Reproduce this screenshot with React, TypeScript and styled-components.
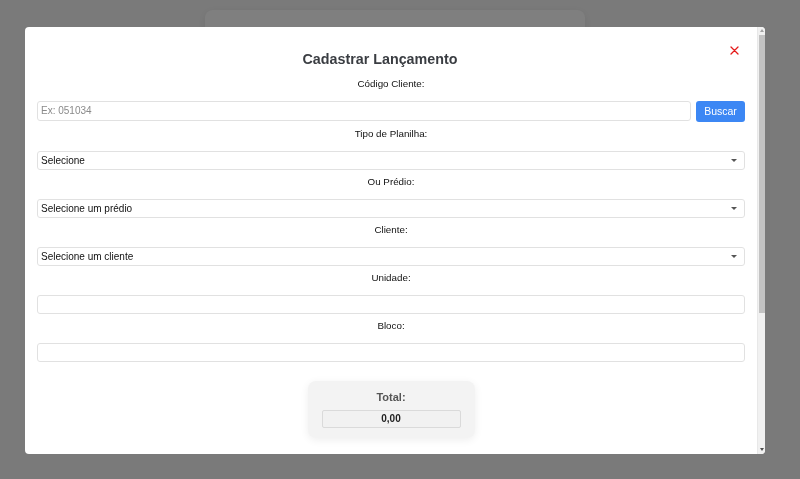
import styled, { createGlobalStyle } from 'styled-components';

const GlobalStyle = createGlobalStyle`
  html, body {
    margin: 0;
    padding: 0;
    background: #f5f5f5;
    font-family: 'Liberation Sans', Arial, sans-serif;
    overflow: hidden;
  }
  * {
    box-sizing: border-box;
  }
`;

const Page = styled.div`
  width: 790px;
  height: 479px;
  padding-top: 10px;
`;

const BackCard = styled.div`
  width: 380px;
  height: 320px;
  margin: 0 auto;
  background: #ffffff;
  border-radius: 8px;
  box-shadow: 0 2px 10px rgba(0, 0, 0, 0.08);
`;

const Overlay = styled.div`
  position: fixed;
  inset: 0;
  background: rgba(0, 0, 0, 0.5);
  display: flex;
  align-items: center;
  padding-left: 25px;
`;

const Modal = styled.div`
  width: 740px;
  height: 427px;
  margin-top: 1px;
  background: #ffffff;
  border-radius: 4px;
  overflow: hidden;
  display: flex;
  color: #000;
`;

const Content = styled.div`
  flex: 1;
  min-width: 0;
  padding: 16px 12px 0;
`;

const ScrollTrack = styled.div`
  flex: none;
  width: 8px;
  background: #f1f1f1;
  border-left: 1px solid #e8e8e8;
  display: flex;
  flex-direction: column;
  align-items: center;
`;

const ScrollArrow = styled.div<{ $down?: boolean; $color: string }>`
  flex: none;
  height: 8px;
  width: 100%;
  display: flex;
  align-items: center;
  justify-content: center;

  &::before {
    content: '';
    width: 0;
    height: 0;
    border-left: 2.5px solid transparent;
    border-right: 2.5px solid transparent;
    ${(p) =>
      p.$down
        ? `border-top: 3px solid ${p.$color};`
        : `border-bottom: 3px solid ${p.$color};`}
  }
`;

const ScrollThumb = styled.div`
  flex: none;
  width: 6px;
  height: 278px;
  background: #c3c3c3;
`;

const ScrollRest = styled.div`
  flex: 1;
`;

const Header = styled.div`
  display: flex;
  align-items: flex-start;
`;

const Title = styled.h2`
  flex: 1;
  margin: 7px 0 0;
  text-align: center;
  font-size: 14.3px;
  line-height: 18px;
  font-weight: 700;
  color: #3a3d42;
`;

const CloseButton = styled.button`
  width: 22px;
  height: 16px;
  padding: 0;
  border: none;
  background: transparent;
  display: flex;
  align-items: center;
  justify-content: center;
  cursor: pointer;
`;

const Form = styled.form`
  margin-top: 10px;
  display: flex;
  flex-direction: column;
`;

const Group = styled.div`
  margin-bottom: 6px;
`;

const Label = styled.label`
  display: block;
  text-align: center;
  font-size: 9.8px;
  line-height: 12px;
  color: #111;
  margin-bottom: 11px;
`;

const Row = styled.div`
  display: flex;
  gap: 5px;
  align-items: flex-start;
`;

const Input = styled.input<{ $tall?: boolean }>`
  display: block;
  width: 100%;
  height: ${(p) => (p.$tall ? '20px' : '19px')};
  padding: 0 3px;
  font-family: 'Liberation Sans', Arial, sans-serif;
  font-size: 10px;
  color: #111;
  background: #fff;
  border: 1px solid #e1e1e1;
  border-radius: 3px;
  outline: none;

  &::placeholder {
    color: #8a8a8a;
  }
`;

const SelectWrap = styled.div`
  position: relative;

  &::after {
    content: '';
    position: absolute;
    right: 8px;
    top: 8px;
    width: 0;
    height: 0;
    border-left: 3px solid transparent;
    border-right: 3px solid transparent;
    border-top: 3px solid #555;
    pointer-events: none;
  }
`;

const Select = styled.select`
  display: block;
  width: 100%;
  height: 19px;
  padding: 0 3px;
  appearance: none;
  font-family: 'Liberation Sans', Arial, sans-serif;
  font-size: 10px;
  color: #111;
  background: #fff;
  border: 1px solid #e1e1e1;
  border-radius: 3px;
  outline: none;
`;

const SearchButton = styled.button`
  flex: none;
  width: 49px;
  height: 21px;
  border: none;
  border-radius: 3px;
  background: #3c87f4;
  color: #ffffff;
  font-family: 'Liberation Sans', Arial, sans-serif;
  font-size: 10.5px;
  cursor: pointer;
`;

const TotalBox = styled.div`
  align-self: center;
  width: 167px;
  margin-top: 13px;
  padding: 10px 14px;
  background: #f3f3f3;
  border-radius: 8px;
  box-shadow: 0 2px 8px rgba(0, 0, 0, 0.07);
  text-align: center;
`;

const TotalLabel = styled.div`
  font-size: 11px;
  line-height: 13px;
  font-weight: 700;
  color: #555;
`;

const TotalValue = styled.div`
  margin-top: 6px;
  height: 18px;
  line-height: 16px;
  border: 1px solid #dadada;
  border-radius: 2px;
  background: #f1f1f1;
  font-size: 10px;
  font-weight: 700;
  color: #222;
`;

const selectFields = [
  { label: 'Tipo de Planilha:', placeholder: 'Selecione' },
  { label: 'Ou Prédio:', placeholder: 'Selecione um prédio' },
  { label: 'Cliente:', placeholder: 'Selecione um cliente' },
];

const App = () => (
  <>
    <GlobalStyle />
    <Page>
      <BackCard />
    </Page>
    <Overlay>
      <Modal>
        <Content>
          <Header>
            <Title>Cadastrar Lançamento</Title>
            <CloseButton type="button" aria-label="Fechar">
              <svg width="9" height="9" viewBox="0 0 9 9">
                <path d="M1 1 L8 8 M8 1 L1 8" stroke="#e41b1b" strokeWidth="1.3" strokeLinecap="round" />
              </svg>
            </CloseButton>
          </Header>
          <Form onSubmit={(e) => e.preventDefault()}>
            <Group>
              <Label>Código Cliente:</Label>
              <Row>
                <Input $tall placeholder="Ex: 051034" />
                <SearchButton type="button">Buscar</SearchButton>
              </Row>
            </Group>
            {selectFields.map((f) => (
              <Group key={f.label}>
                <Label>{f.label}</Label>
                <SelectWrap>
                  <Select defaultValue="">
                    <option value="">{f.placeholder}</option>
                  </Select>
                </SelectWrap>
              </Group>
            ))}
            <Group>
              <Label>Unidade:</Label>
              <Input />
            </Group>
            <Group>
              <Label>Bloco:</Label>
              <Input />
            </Group>
            <TotalBox>
              <TotalLabel>Total:</TotalLabel>
              <TotalValue>0,00</TotalValue>
            </TotalBox>
          </Form>
        </Content>
        <ScrollTrack>
          <ScrollArrow $color="#a3a3a3" />
          <ScrollThumb />
          <ScrollRest />
          <ScrollArrow $down $color="#505050" />
        </ScrollTrack>
      </Modal>
    </Overlay>
  </>
);

export default App;
